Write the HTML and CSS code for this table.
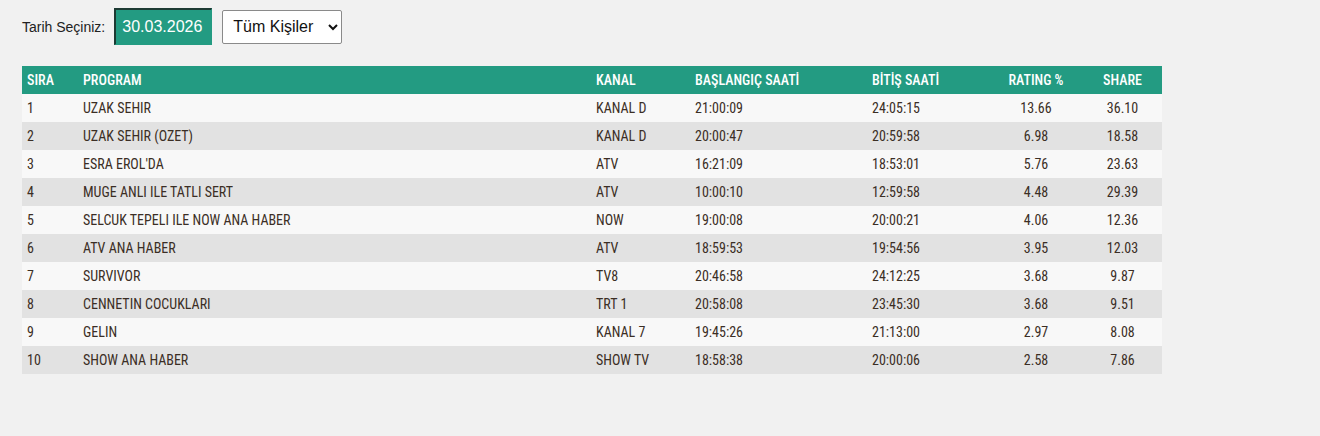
FILE: index.html
```html
<!DOCTYPE html>
<html lang="tr">
<head>
<meta charset="utf-8">
<link rel="stylesheet" href="styles.css">
</head>
<body>
<div class="controls">
  <label class="lbl">Tarih Seçiniz:</label>
  <input class="date" type="text" value="30.03.2026">
  <select class="sel"><option>Tüm Kişiler</option></select>
</div>
<table class="rt">
  <colgroup>
    <col class="c1"><col class="c2"><col class="c3"><col class="c4"><col class="c5"><col class="c6"><col class="c7">
  </colgroup>
  <thead>
    <tr><th>SIRA</th><th>PROGRAM</th><th>KANAL</th><th>BAŞLANGIÇ SAATİ</th><th>BİTİŞ SAATİ</th><th class="num">RATING %</th><th class="num">SHARE</th></tr>
  </thead>
  <tbody>
    <tr><td>1</td><td>UZAK SEHIR</td><td>KANAL D</td><td>21:00:09</td><td>24:05:15</td><td class="num">13.66</td><td class="num">36.10</td></tr>
    <tr><td>2</td><td>UZAK SEHIR (OZET)</td><td>KANAL D</td><td>20:00:47</td><td>20:59:58</td><td class="num">6.98</td><td class="num">18.58</td></tr>
    <tr><td>3</td><td>ESRA EROL'DA</td><td>ATV</td><td>16:21:09</td><td>18:53:01</td><td class="num">5.76</td><td class="num">23.63</td></tr>
    <tr><td>4</td><td>MUGE ANLI ILE TATLI SERT</td><td>ATV</td><td>10:00:10</td><td>12:59:58</td><td class="num">4.48</td><td class="num">29.39</td></tr>
    <tr><td>5</td><td>SELCUK TEPELI ILE NOW ANA HABER</td><td>NOW</td><td>19:00:08</td><td>20:00:21</td><td class="num">4.06</td><td class="num">12.36</td></tr>
    <tr><td>6</td><td>ATV ANA HABER</td><td>ATV</td><td>18:59:53</td><td>19:54:56</td><td class="num">3.95</td><td class="num">12.03</td></tr>
    <tr><td>7</td><td>SURVIVOR</td><td>TV8</td><td>20:46:58</td><td>24:12:25</td><td class="num">3.68</td><td class="num">9.87</td></tr>
    <tr><td>8</td><td>CENNETIN COCUKLARI</td><td>TRT 1</td><td>20:58:08</td><td>23:45:30</td><td class="num">3.68</td><td class="num">9.51</td></tr>
    <tr><td>9</td><td>GELIN</td><td>KANAL 7</td><td>19:45:26</td><td>21:13:00</td><td class="num">2.97</td><td class="num">8.08</td></tr>
    <tr><td>10</td><td>SHOW ANA HABER</td><td>SHOW TV</td><td>18:58:38</td><td>20:00:06</td><td class="num">2.58</td><td class="num">7.86</td></tr>
  </tbody>
</table>
</body>
</html>
```
FILE: styles.css
```css
html, body {
  margin: 0;
  padding: 0;
  background: #f1f1f1;
}
body {
  padding: 8px 22px;
}
.controls {
  display: flex;
  align-items: center;
  height: 37px;
  margin-bottom: 21px;
}
.lbl {
  font-family: "Liberation Sans", Arial, sans-serif;
  font-size: 14px;
  color: #222;
  margin-right: 9px;
}
.date {
  box-sizing: border-box;
  width: 98px;
  height: 37px;
  background: #239b82;
  color: #fff;
  font-family: "Liberation Sans", Arial, sans-serif;
  font-size: 16px;
  padding: 0 6px;
  border-style: solid;
  border-width: 2px 1px 1px 2px;
  border-color: #1d3a33 #239b82 #239b82 #1d3a33;
  outline: none;
  margin: 0 10px 0 0;
}
.sel {
  box-sizing: border-box;
  width: 120px;
  height: 34px;
  background: #fff;
  color: #111;
  font-family: "Liberation Sans", Arial, sans-serif;
  font-size: 16px;
  border: 1px solid #8a8a8a;
  border-radius: 2px;
  padding: 0 6px;
}
.rt {
  border-collapse: collapse;
  width: 1140px;
  table-layout: fixed;
  font-family: "Roboto Condensed", "DejaVu Sans Condensed", "Liberation Sans Narrow", sans-serif;
  font-stretch: condensed;
  font-size: 14px;
  color: #3b2e25;
}
.c1 { width: 56px; }
.c2 { width: 513px; }
.c3 { width: 99px; }
.c4 { width: 177px; }
.c5 { width: 122px; }
.c6 { width: 94px; }
.c7 { width: 79px; }
.rt th, .rt td {
  height: 28px;
  padding: 0 5px;
  text-align: left;
  white-space: nowrap;
  box-sizing: border-box;
}
.rt th {
  background: #239b82;
  color: #fff;
  font-weight: 500;
}
.rt .num { text-align: center; }
.rt tbody tr:nth-child(odd) { background: #f8f8f8; }
.rt tbody tr:nth-child(even) { background: #e2e2e2; }
```
